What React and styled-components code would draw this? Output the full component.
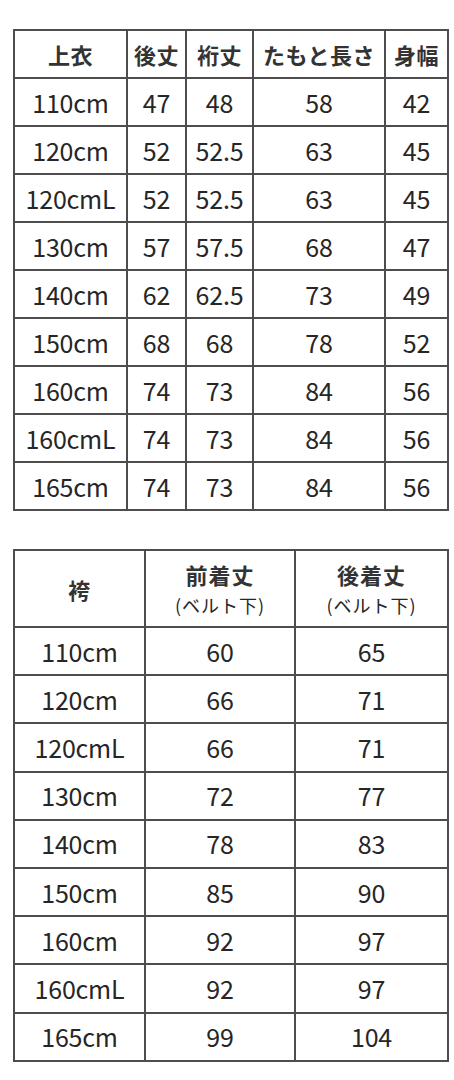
import React from "react";
import styled, { createGlobalStyle } from "styled-components";

const Global = createGlobalStyle`
  html, body { margin: 0; padding: 0; background: #ffffff; }
  body { font-family: "Noto Sans CJK JP", "Noto Sans", sans-serif; color: #262626; }
`;

const Page = styled.div`
  display: flex;
  flex-direction: column;
  gap: 38px;
  padding: 29px 0 0 13px;
  width: 434px;
`;

const Table = styled.table`
  width: 434px;
  table-layout: fixed;
  border-collapse: collapse;
  border: 2px solid #4d4d4d;
`;

const Row = styled.tr`
  height: ${(p) => p.$h || 48}px;
`;

const Cell = styled.td`
  border: 2px solid #4d4d4d;
  padding: 0;
  text-align: center;
  vertical-align: middle;
  font-size: ${(p) => (p.$head ? 22 : 25)}px;
  font-weight: ${(p) => (p.$head ? 700 : 400)};
  color: ${(p) => (p.$head ? "#333333" : "#262626")};
  line-height: 1;
  white-space: nowrap;
  letter-spacing: ${(p) => (p.$head ? "0.5px" : "-0.2px")};
`;

const HeadMain = styled.div`
  font-size: 22px;
  font-weight: 700;
  color: #333333;
  line-height: 1;
  letter-spacing: 1px;
`;

const HeadSub = styled.div`
  font-size: 18px;
  font-weight: 400;
  line-height: 1;
  letter-spacing: 1px;
  margin-top: 11px;
`;

const top = [
  ["110cm", "47", "48", "58", "42"],
  ["120cm", "52", "52.5", "63", "45"],
  ["120cmL", "52", "52.5", "63", "45"],
  ["130cm", "57", "57.5", "68", "47"],
  ["140cm", "62", "62.5", "73", "49"],
  ["150cm", "68", "68", "78", "52"],
  ["160cm", "74", "73", "84", "56"],
  ["160cmL", "74", "73", "84", "56"],
  ["165cm", "74", "73", "84", "56"],
];

const bottom = [
  ["110cm", "60", "65"],
  ["120cm", "66", "71"],
  ["120cmL", "66", "71"],
  ["130cm", "72", "77"],
  ["140cm", "78", "83"],
  ["150cm", "85", "90"],
  ["160cm", "92", "97"],
  ["160cmL", "92", "97"],
  ["165cm", "99", "104"],
];

export default function App() {
  return (
    <>
      <Global />
      <Page>
        <Table>
          <colgroup>
            <col style={{ width: "113px" }} />
            <col style={{ width: "59px" }} />
            <col style={{ width: "67px" }} />
            <col style={{ width: "132px" }} />
            <col style={{ width: "63px" }} />
          </colgroup>
          <tbody>
            <Row>
              <Cell $head>上衣</Cell>
              <Cell $head>後丈</Cell>
              <Cell $head>裄丈</Cell>
              <Cell $head>たもと長さ</Cell>
              <Cell $head>身幅</Cell>
            </Row>
            {top.map((r) => (
              <Row key={r[0]}>
                {r.map((v, i) => (
                  <Cell key={i}>{v}</Cell>
                ))}
              </Row>
            ))}
          </tbody>
        </Table>
        <Table>
          <colgroup>
            <col style={{ width: "131px" }} />
            <col style={{ width: "150px" }} />
            <col style={{ width: "153px" }} />
          </colgroup>
          <tbody>
            <Row $h={77}>
              <Cell $head>袴</Cell>
              <Cell>
                <HeadMain>前着丈</HeadMain>
                <HeadSub>(ベルト下)</HeadSub>
              </Cell>
              <Cell>
                <HeadMain>後着丈</HeadMain>
                <HeadSub>(ベルト下)</HeadSub>
              </Cell>
            </Row>
            {bottom.map((r) => (
              <Row key={r[0]} $h={48.2}>
                {r.map((v, i) => (
                  <Cell key={i}>{v}</Cell>
                ))}
              </Row>
            ))}
          </tbody>
        </Table>
      </Page>
    </>
  );
}
